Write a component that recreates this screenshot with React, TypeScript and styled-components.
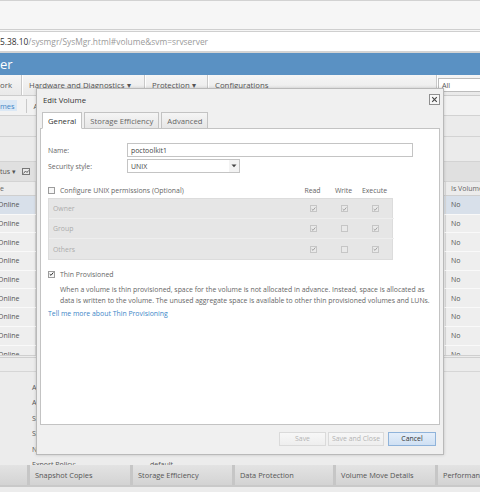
import React from "react";
import styled, { createGlobalStyle } from "styled-components";

const Global = createGlobalStyle`
  html, body { margin: 0; padding: 0; }
  body {
    width: 480px; height: 492px; overflow: hidden; background: #fff;
    font-family: "Open Sans", "Noto Sans", sans-serif;
  }
  #root { width: 480px; height: 492px; }
`;

const Page = styled.div`
  position: relative;
  width: 480px;
  height: 492px;
  overflow: hidden;
  display: flex;
  flex-direction: column;
  color: #555;
  font-family: "Open Sans", "Noto Sans", sans-serif;
`;

const BrowserChrome = styled.div`
  height: 28px;
  flex: none;
  background: #f6f6f6;
  border-top: 1px solid #d2d2d2;
  border-bottom: 3px double #cfcfcf;
`;

const AddressBar = styled.div`
  height: 19px;
  flex: none;
  background: #fff;
  border-bottom: 2px solid #d4d4d4;
  display: flex;
  align-items: center;
  font-size: 8.4px;
  color: #9a9a9a;
  white-space: nowrap;
`;

const Host = styled.span`
  color: #333;
`;

const AppHeader = styled.div`
  height: 22px;
  flex: none;
  background: #5a91c3;
  color: #fff;
  font-size: 13px;
  display: flex;
  align-items: center;
`;

const MenuBar = styled.div`
  height: 20px;
  flex: none;
  background: linear-gradient(#f5f5f5, #e9e9e9);
  border-bottom: 1px solid #cdcdcd;
  display: flex;
  align-items: stretch;
  font-size: 7.8px;
  color: #555;
  white-space: nowrap;
`;

const MenuItem = styled.div<{ $w: number }>`
  width: ${(p) => p.$w}px;
  flex: none;
  display: flex;
  align-items: center;
  padding-left: ${(p) => (p.$w > 30 ? 7 : 0)}px;
  box-sizing: border-box;
  border-right: 1px solid #c9c9c9;
  box-shadow: 1px 0 0 #fff;
  overflow: hidden;
`;

const SearchBox = styled.div`
  flex: 1;
  margin: 3px 0 3px 1px;
  background: #fff;
  border: 1px solid #bcbcbc;
  border-right: none;
  font-size: 7.2px;
  display: flex;
  align-items: center;
  padding-left: 3px;
  color: #555;
`;

const SubBar = styled.div`
  height: 19px;
  flex: none;
  background: #f2f2f2;
  border-bottom: 1px solid #d2d2d2;
  display: flex;
  align-items: center;
  font-size: 7.4px;
  white-space: nowrap;
`;

const SubTab = styled.div<{ $active?: boolean }>`
  height: 11px;
  display: flex;
  align-items: center;
  padding: 0 2px 0 0;
  background: ${(p) => (p.$active ? "#dbe8f5" : "transparent")};
  color: ${(p) => (p.$active ? "#3f86c6" : "#666")};
`;

const SubSep = styled.div`
  width: 1px;
  height: 14px;
  background: #c9c9c9;
  margin: 0 7px 0 9px;
`;

const Content = styled.div`
  flex: 1;
  display: flex;
  flex-direction: column;
  background: #ececec;
  overflow: hidden;
`;

const Band = styled.div<{ $h: number; $bg?: string }>`
  height: ${(p) => p.$h}px;
  flex: none;
  box-sizing: border-box;
  background: ${(p) => p.$bg || "#ebebeb"};
  border-bottom: 1px solid #d3d3d3;
  display: flex;
  align-items: center;
  font-size: 7px;
  color: #555;
  white-space: nowrap;
`;

const ToolText = styled.span`
  margin-right: 6px;
`;

const TableRow = styled.div<{ $selected?: boolean; $header?: boolean }>`
  height: ${(p) => (p.$header ? 14 : 18.7)}px;
  flex: none;
  box-sizing: border-box;
  display: grid;
  grid-template-columns: 36px 1fr 35px;
  align-items: center;
  font-size: 7px;
  color: ${(p) => (p.$header ? "#666" : "#555")};
  background: ${(p) =>
    p.$selected ? "#d8e0ea" : p.$header ? "#ececec" : "#eeeeee"};
  border-bottom: 1px solid ${(p) => (p.$header ? "#cfcfcf" : "#f9f9f9")};
  white-space: nowrap;
`;

const LeftCell = styled.div`
  overflow: hidden;
  height: 100%;
  display: flex;
  align-items: center;
  border-right: 1px solid #d8d8d8;
`;

const CutText = styled.span`
  margin-left: -2px;
`;

const RightCell = styled.div`
  grid-column: 3;
  height: 100%;
  display: flex;
  align-items: center;
  padding-left: 5px;
  border-left: 1px solid #d8d8d8;
  overflow: hidden;
`;

const RowsWrap = styled.div`
  height: 159px;
  flex: none;
  overflow: hidden;
  display: flex;
  flex-direction: column;
  border-bottom: 3px double #cfcfcf;
`;

const Spacer = styled.div`
  height: 13px;
  flex: none;
  border-bottom: 1px solid #d6d6d6;
`;

const Details = styled.div`
  flex: 1;
  overflow: hidden;
  display: grid;
  grid-template-columns: 118px 1fr;
  grid-auto-rows: 15.4px;
  padding: 11px 0 0 32px;
  font-size: 7px;
  color: #555;
  white-space: nowrap;
`;

const BottomTabs = styled.div`
  height: 20px;
  flex: none;
  display: flex;
  background: linear-gradient(#e3e3e3, #d3d3d3);
  border-bottom: 2px solid #c9c9c9;
  margin-bottom: 5px;
  font-size: 7.4px;
  color: #555;
  white-space: nowrap;
`;

const BottomTab = styled.div<{ $w: number }>`
  width: ${(p) => p.$w}px;
  flex: none;
  display: flex;
  align-items: center;
  padding-left: 5px;
  box-sizing: border-box;
  border-right: 3px solid #c6c6c6;
  overflow: hidden;
`;

/* ---------- Dialog ---------- */

const Dialog = styled.div`
  position: absolute;
  left: 36px;
  top: 88px;
  width: 408px;
  height: 367px;
  box-sizing: border-box;
  background: #f0f0f0;
  border: 1px solid #b9b9b9;
  box-shadow: 0 0 3px rgba(0, 0, 0, 0.18);
  display: flex;
  flex-direction: column;
  padding: 0 3px;
`;

const TitleBar = styled.div`
  height: 21px;
  flex: none;
  display: flex;
  align-items: center;
  justify-content: space-between;
  font-size: 7.7px;
  color: #333;
  padding: 0 0 0 3px;
`;

const CloseBox = styled.div`
  width: 9px;
  height: 9px;
  border: 1px solid #8f8f8f;
  background: #f7f7f7;
  display: flex;
  align-items: center;
  justify-content: center;
`;

const TabRow = styled.div`
  height: 18px;
  flex: none;
  display: flex;
  align-items: flex-end;
  gap: 2px;
  padding-left: 2px;
  position: relative;
  z-index: 1;
`;

const Tab = styled.div<{ $active?: boolean }>`
  height: ${(p) => (p.$active ? 17 : 16)}px;
  box-sizing: border-box;
  padding: 0 5px;
  display: flex;
  align-items: center;
  font-size: 7.7px;
  color: ${(p) => (p.$active ? "#333" : "#666")};
  background: ${(p) => (p.$active ? "#fff" : "linear-gradient(#f5f5f5,#e6e6e6)")};
  border: 1px solid #c3c3c3;
  border-bottom: ${(p) => (p.$active ? "1px solid #fff" : "none")};
  margin-bottom: ${(p) => (p.$active ? -1 : 0)}px;
`;

const Panel = styled.div`
  height: 297px;
  flex: none;
  box-sizing: border-box;
  background: #fff;
  border: 1px solid #c3c3c3;
  padding: 14px 0 0 7px;
  display: flex;
  flex-direction: column;
  font-size: 6.9px;
  color: #666;
`;

const FieldRow = styled.div`
  display: grid;
  grid-template-columns: 79px auto;
  align-items: center;
  height: 14px;
  margin-bottom: 2px;
`;

const TextInput = styled.div`
  width: 286px;
  height: 14px;
  box-sizing: border-box;
  border: 1px solid #c4c4c4;
  display: flex;
  align-items: center;
  padding-left: 3px;
  color: #444;
`;

const Select = styled.div`
  width: 113px;
  height: 14px;
  box-sizing: border-box;
  border: 1px solid #c4c4c4;
  display: flex;
  align-items: center;
  justify-content: space-between;
  padding-left: 3px;
  color: #444;
`;

const SelectArrow = styled.div`
  width: 10px;
  height: 100%;
  display: flex;
  align-items: center;
  justify-content: center;
  background: #f3f3f3;
`;

const PermGrid = styled.div`
  width: 345px;
  display: grid;
  grid-template-columns: 249px 31px 31px 31px;
  box-sizing: border-box;
`;

const PermHead = styled(PermGrid)`
  height: 12px;
  margin-top: 9px;
  align-items: center;
`;

const HeadLabel = styled.div`
  text-align: center;
  color: #666;
`;

const CheckLabel = styled.label`
  display: flex;
  align-items: center;
  gap: 5px;
  color: #666;
`;

const PermBox = styled.div`
  margin-top: 2px;
  width: 345px;
  background: #e6e6e6;
  border: 1px solid #dcdcdc;
  box-sizing: border-box;
  display: flex;
  flex-direction: column;
`;

const PermRow = styled(PermGrid)`
  height: 20px;
  align-items: center;
  border-bottom: 1px solid #eeeeee;
  &:last-child { border-bottom: none; }
`;

const PermName = styled.div`
  padding-left: 4px;
  color: #acacac;
`;

const CheckCell = styled.div`
  display: flex;
  justify-content: center;
`;

const Box = styled.span<{ $disabled?: boolean }>`
  width: 7px;
  height: 7px;
  flex: none;
  box-sizing: border-box;
  border: 1px solid ${(p) => (p.$disabled ? "#c6c6c6" : "#9c9c9c")};
  background: ${(p) => (p.$disabled ? "#e9e9e9" : "#f7f7f7")};
  display: inline-flex;
  align-items: center;
  justify-content: center;
`;

const ThinRow = styled.div`
  margin-top: 8px;
  height: 12px;
  display: flex;
  align-items: center;
`;

const Desc = styled.p`
  margin: 4px 0 0 12px;
  line-height: 11px;
  color: #666;
  white-space: nowrap;
`;

const Link = styled.a`
  margin-top: 2px;
  color: #3c86c7;
  text-decoration: none;
  line-height: 11px;
`;

const Footer = styled.div`
  flex: 1;
  display: flex;
  justify-content: flex-end;
  align-items: center;
  padding: 0 4px 2px 0;
`;

const Button = styled.div<{ $w: number; $primary?: boolean; $gap: number }>`
  width: ${(p) => p.$w}px;
  height: 14px;
  margin-left: ${(p) => p.$gap}px;
  box-sizing: border-box;
  display: flex;
  align-items: center;
  justify-content: center;
  font-size: 6.9px;
  color: ${(p) => (p.$primary ? "#333" : "#b4b4b4")};
  background: ${(p) =>
    p.$primary ? "linear-gradient(#e4eefa,#cfe0f3)" : "linear-gradient(#f7f7f7,#eeeeee)"};
  border: 1px solid ${(p) => (p.$primary ? "#8fb3da" : "#dadada")};
`;

const Check = ({ color }: { color: string }) => (
  <svg width="6" height="6" viewBox="0 0 6 6">
    <path d="M0.8 3.1 L2.4 4.6 L5.2 1.2" fill="none" stroke={color} strokeWidth="1.1" />
  </svg>
);

const CheckBox = ({ checked, disabled }: { checked?: boolean; disabled?: boolean }) => (
  <Box $disabled={disabled}>{checked && <Check color={disabled ? "#9a9a9a" : "#222"} />}</Box>
);

const perms: [string, boolean, boolean, boolean][] = [
  ["Owner", true, true, true],
  ["Group", true, false, true],
  ["Others", true, false, true],
];

const rowCount = 9;

export default function App() {
  return (
    <>
      <Global />
      <Page>
        <BrowserChrome />
        <AddressBar>
          <Host>5.38.10</Host>/sysmgr/SysMgr.html#volume&amp;svm=srvserver
        </AddressBar>
        <AppHeader>er</AppHeader>
        <MenuBar>
          <MenuItem $w={22}>ork</MenuItem>
          <MenuItem $w={123}>Hardware and Diagnostics ▾</MenuItem>
          <MenuItem $w={63}>Protection ▾</MenuItem>
          <MenuItem $w={229}>Configurations</MenuItem>
          <SearchBox>All</SearchBox>
        </MenuBar>
        <SubBar>
          <SubTab $active>mes</SubTab>
          <SubSep />
          <span>Ap</span>
        </SubBar>
        <Content>
          <Band $h={21} />
          <Band $h={25} />
          <Band $h={20} $bg="#e0e0e0">
            <ToolText>tus ▾</ToolText>
            <svg width="8" height="7" viewBox="0 0 8 7">
              <rect x="0.5" y="0.5" width="7" height="6" fill="#e8e8e8" stroke="#777" />
              <path d="M1.5 5.5 L3.5 3 L5 4.5 L6.5 2.5" fill="none" stroke="#555" strokeWidth="0.9" />
            </svg>
          </Band>
          <TableRow $header>
            <LeftCell>e</LeftCell>
            <RightCell>Is Volume</RightCell>
          </TableRow>
          <RowsWrap>
            {Array.from({ length: rowCount }).map((_, i) => (
              <TableRow key={i} $selected={i === 0}>
                <LeftCell>
                  <CutText>Online</CutText>
                </LeftCell>
                <RightCell>No</RightCell>
              </TableRow>
            ))}
          </RowsWrap>
          <Spacer />
          <Details>
            <span>Aggregate:</span>
            <span />
            <span>Available:</span>
            <span />
            <span>Storage Pool:</span>
            <span />
            <span>Snapshot Reserve:</span>
            <span />
            <span>Node:</span>
            <span />
            <span>Export Policy:</span>
            <span>default</span>
          </Details>
          <BottomTabs>
            <BottomTab $w={30} />
            <BottomTab $w={103}>Snapshot Copies</BottomTab>
            <BottomTab $w={102}>Storage Efficiency</BottomTab>
            <BottomTab $w={101}>Data Protection</BottomTab>
            <BottomTab $w={102}>Volume Move Details</BottomTab>
            <BottomTab $w={60}>Performance</BottomTab>
          </BottomTabs>
        </Content>

        <Dialog>
          <TitleBar>
            <span>Edit Volume</span>
            <CloseBox>
              <svg width="7" height="7" viewBox="0 0 7 7">
                <path d="M1.2 1.2 L5.8 5.8 M5.8 1.2 L1.2 5.8" stroke="#444" strokeWidth="1.1" />
              </svg>
            </CloseBox>
          </TitleBar>
          <TabRow>
            <Tab $active>General</Tab>
            <Tab>Storage Efficiency</Tab>
            <Tab>Advanced</Tab>
          </TabRow>
          <Panel>
            <FieldRow>
              <span>Name:</span>
              <TextInput>poctoolkit1</TextInput>
            </FieldRow>
            <FieldRow>
              <span>Security style:</span>
              <Select>
                UNIX
                <SelectArrow>
                  <svg width="6" height="4" viewBox="0 0 6 4">
                    <path d="M0.5 0.5 L3 3.3 L5.5 0.5 Z" fill="#444" />
                  </svg>
                </SelectArrow>
              </Select>
            </FieldRow>
            <PermHead>
              <CheckLabel>
                <CheckBox />
                Configure UNIX permissions (Optional)
              </CheckLabel>
              <HeadLabel>Read</HeadLabel>
              <HeadLabel>Write</HeadLabel>
              <HeadLabel>Execute</HeadLabel>
            </PermHead>
            <PermBox>
              {perms.map(([name, r, w, x]) => (
                <PermRow key={name}>
                  <PermName>{name}</PermName>
                  <CheckCell>
                    <CheckBox checked={r} disabled />
                  </CheckCell>
                  <CheckCell>
                    <CheckBox checked={w} disabled />
                  </CheckCell>
                  <CheckCell>
                    <CheckBox checked={x} disabled />
                  </CheckCell>
                </PermRow>
              ))}
            </PermBox>
            <ThinRow>
              <CheckLabel>
                <CheckBox checked />
                Thin Provisioned
              </CheckLabel>
            </ThinRow>
            <Desc>
              When a volume is thin provisioned, space for the volume is not allocated in advance. Instead, space is allocated as
              <br />
              data is written to the volume. The unused aggregate space is available to other thin provisioned volumes and LUNs.
            </Desc>
            <Link href="#">Tell me more about Thin Provisioning</Link>
          </Panel>
          <Footer>
            <Button $w={47} $gap={0}>Save</Button>
            <Button $w={56} $gap={2}>Save and Close</Button>
            <Button $w={48} $gap={4} $primary>Cancel</Button>
          </Footer>
        </Dialog>
      </Page>
    </>
  );
}
